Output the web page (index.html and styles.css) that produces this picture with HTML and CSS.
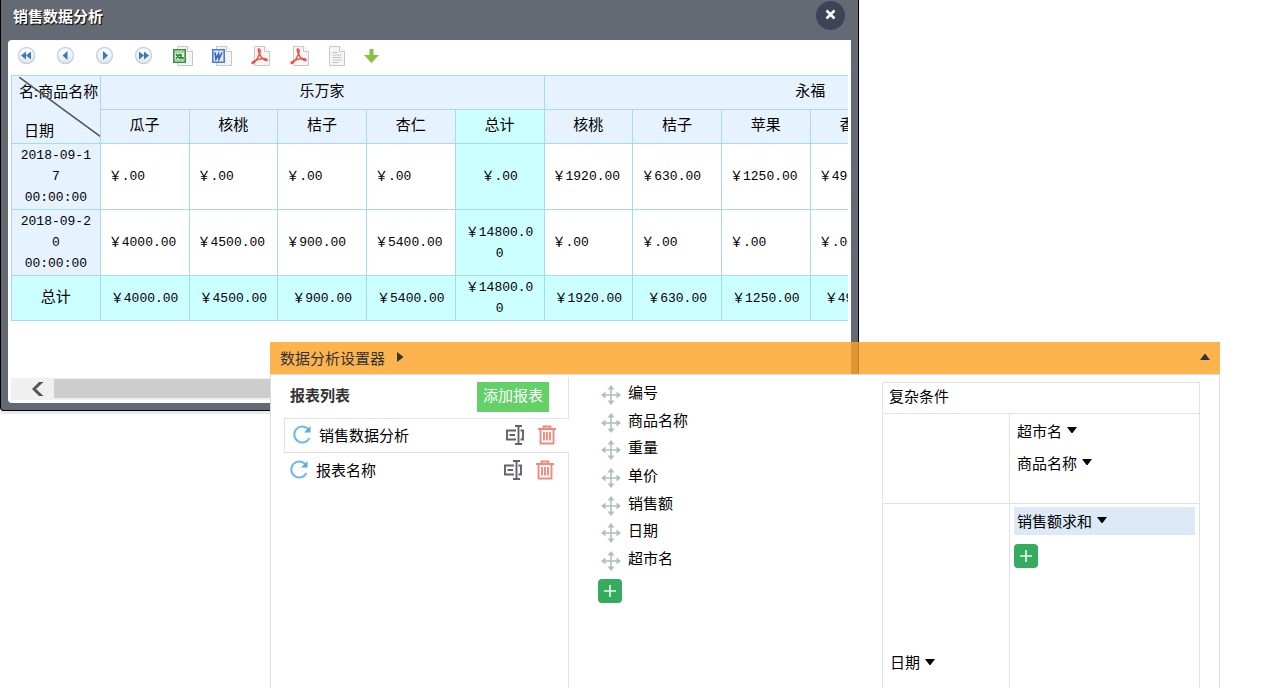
FILE: index.html
```html
<!DOCTYPE html>
<html lang="zh-CN">
<head>
    <meta charset="UTF-8">
    <meta name="viewport" content="width=device-width, initial-scale=1.0">
    <title>销售数据分析</title>
    <link rel="stylesheet" href="styles.css">
</head>
<body>
    <!-- Shared icons -->
    <svg class="icon-defs" aria-hidden="true">
        <defs>
            <linearGradient id="ballFill" x1="0" y1="0" x2="0" y2="1">
                <stop offset="0" stop-color="#ffffff"/>
                <stop offset="1" stop-color="#dce9f5"/>
            </linearGradient>
            <g id="ball">
                <circle cx="9.5" cy="9.5" r="8" fill="url(#ballFill)" stroke="#c9d0d9" stroke-width="1.4"/>
            </g>
            <g id="page">
                <path d="M2.500 .5h10l5 5v14h-15z" fill="#f5f5f5" stroke="#c8c8c8"/>
                <path d="M12.500 .5v5h5" fill="#fff" stroke="#c8c8c8"/>
            </g>
            <g id="pdf">
                <use href="#page" x="1"/>
                <path d="M7.500 3C9.500 2.500 9.500 5.500 8.500 8S4 17.500 1.500 17.500C-.5 16.500 5 13.800 9 13S16.500 12.500 16 14.300C15 15.500 10.500 12.500 9 9S6.500 4 7.500 3z" fill="none" stroke="#e5534b" stroke-width="1.500"/>
            </g>
            <symbol id="refresh" viewBox="0 0 20 20">
                <path d="M16.500 4.500A8 8 0 1 0 17.500 13" fill="none" stroke="#71b7e6" stroke-width="2"/>
                <path d="M18.500 1v6.500H12z" fill="#5aabe2"/>
            </symbol>
            <symbol id="rename" viewBox="0 0 18 20">
                <path d="M10 5.500H1v9h9M14.500 5.500H17v9h-2.500M3.500 10H9M9 1h7M9 19h7M12.500 1v18" fill="none" stroke="#62626f" stroke-width="1.900"/>
            </symbol>
            <symbol id="trash" viewBox="0 0 18 20">
                <path d="M0 4h18M5.500 4V1.500h7V4M2.500 4v14.500h13V4M6 7v8.500M9 7v8.500M12 7v8.500" fill="none" stroke="#f08a7c" stroke-width="1.900"/>
            </symbol>
            <symbol id="move" viewBox="0 0 20 20">
                <path d="M10 3v14M3 10h14" stroke="#afbfbe" stroke-width="1.500"/>
                <path d="M10 0l3.500 4.500h-7zM10 20l3.500-4.500h-7zM0 10l4.500-3.500v7zM20 10l-4.500-3.500v7z" fill="#afbfbe"/>
            </symbol>
            <symbol id="plus" viewBox="0 0 24 24">
                <rect width="24" height="24" rx="4" fill="#36ab60"/>
                <path d="M12 6v12M6 12h12" stroke="#e4f7ea" stroke-width="1.700"/>
            </symbol>
            <symbol id="down" viewBox="0 0 10 6">
                <path d="M0 0h10L5.500 6h-1z"/>
            </symbol>
        </defs>
    </svg>

    <!-- Report Window -->
    <section class="report-window">
        <header class="window-title">
            <h1>销售数据分析</h1>
            <button class="close-btn" aria-label="关闭">
                <svg width="11" height="11" viewBox="0 0 11 11"><path d="M1.500 1.500l8 8M9.500 1.500l-8 8" stroke="#fff" stroke-width="2.500"/></svg>
            </button>
        </header>
        <div class="window-body">
            <div class="toolbar">
                <button aria-label="首页"><svg viewBox="0 0 20 20"><use href="#ball"/><path d="M9 5.500v8l-5-4zM14 5.500v8l-5-4z" fill="#3f76c3"/></svg></button>
                <button aria-label="上一页"><svg viewBox="0 0 20 20"><use href="#ball"/><path d="M11.500 5v9l-5-4.500z" fill="#3f76c3"/></svg></button>
                <button aria-label="下一页"><svg viewBox="0 0 20 20"><use href="#ball"/><path d="M8 5v9l5-4.500z" fill="#3f76c3"/></svg></button>
                <button aria-label="末页"><svg viewBox="0 0 20 20"><use href="#ball"/><path d="M5 5.500v8l5-4zM10 5.500v8l5-4z" fill="#3f76c3"/></svg></button>
                <button aria-label="导出Excel"><svg viewBox="0 0 20 20"><use href="#page" x="2"/><path d="M.8 3.800h11.400v12.400H.8z" fill="#e3f2df" stroke="#388e3c" stroke-width="1.600"/><path d="M2 6h9M2 14h9" stroke="#6cb56c"/><path d="M3 8l4 4.500M7 8l-4 4.500M8 8v4h3" fill="none" stroke="#267a2b" stroke-width="1.600"/></svg></button>
                <button aria-label="导出Word"><svg viewBox="0 0 20 20"><use href="#page" x="2"/><path d="M.8 3.800h11.400v12.400H.8z" fill="#e4ecfb" stroke="#4c7bd0" stroke-width="1.600"/><path d="M3 6.500l1 6.500 2.500-5 .5 5 3-6.500" fill="none" stroke="#3468c4" stroke-width="1.700"/></svg></button>
                <button aria-label="导出PDF"><svg viewBox="0 0 20 20"><use href="#pdf"/></svg></button>
                <button aria-label="分页导出PDF"><svg viewBox="0 0 20 20"><use href="#pdf"/></svg></button>
                <button class="narrow" aria-label="导出文本"><svg viewBox="2 0 16 20"><use href="#page"/><path d="M5.500 6.500h5M5.500 9h9M5.500 11.500h9M5.500 14h9M5.500 16.500h6" stroke="#c2c2c2"/></svg></button>
                <button class="narrow" aria-label="下载"><svg viewBox="0 0 16 16"><path d="M5.500 1h4v6H15l-7.500 8L0 7h5.500z" fill="#83c340"/></svg></button>
            </div>

            <div class="table-view">
                <table class="report">
                    <tr>
                        <th class="corner" rowspan="2">
                            <svg class="slash" viewBox="0 0 82 60" preserveAspectRatio="none"><path d="M0 0l82 60" stroke="#555" stroke-width="1.500"/></svg>
                            <div class="corner-top">名:商品名称</div>
                            <div class="corner-bottom">日期</div>
                        </th>
                        <th colspan="5">乐万家</th>
                        <th colspan="6">永福</th>
                    </tr>
                    <tr>
                        <th>瓜子</th>
                        <th>核桃</th>
                        <th>桔子</th>
                        <th>杏仁</th>
                        <th class="sum">总计</th>
                        <th>核桃</th>
                        <th>桔子</th>
                        <th>苹果</th>
                        <th>香蕉</th>
                        <th></th>
                        <th></th>
                    </tr>
                    <tr>
                        <th>2018-09-17<br>00:00:00</th>
                        <td>￥.00</td>
                        <td>￥.00</td>
                        <td>￥.00</td>
                        <td>￥.00</td>
                        <td class="sum">￥.00</td>
                        <td>￥1920.00</td>
                        <td>￥630.00</td>
                        <td>￥1250.00</td>
                        <td>￥490.00</td>
                        <td></td>
                        <td></td>
                    </tr>
                    <tr>
                        <th>2018-09-20<br>00:00:00</th>
                        <td>￥4000.00</td>
                        <td>￥4500.00</td>
                        <td>￥900.00</td>
                        <td>￥5400.00</td>
                        <td class="sum">￥14800.00</td>
                        <td>￥.00</td>
                        <td>￥.00</td>
                        <td>￥.00</td>
                        <td>￥.00</td>
                        <td></td>
                        <td></td>
                    </tr>
                    <tr>
                        <th class="sum">总计</th>
                        <td class="sum">￥4000.00</td>
                        <td class="sum">￥4500.00</td>
                        <td class="sum">￥900.00</td>
                        <td class="sum">￥5400.00</td>
                        <td class="sum">￥14800.00</td>
                        <td class="sum">￥1920.00</td>
                        <td class="sum">￥630.00</td>
                        <td class="sum">￥1250.00</td>
                        <td class="sum">￥490.00</td>
                        <td class="sum"></td>
                        <td class="sum"></td>
                    </tr>
                </table>
            </div>

            <div class="scrollbar">
                <button class="scroll-left" aria-label="向左滚动">
                    <svg width="12" height="14" viewBox="0 0 12 14"><path d="M11.500 0L4 7l7.500 7H7L0 7l7-7z" fill="#555"/></svg>
                </button>
                <div class="scroll-thumb"></div>
            </div>
        </div>
    </section>

    <!-- Settings Panel -->
    <section class="settings">
        <header class="settings-title">
            <h2>数据分析设置器</h2>
            <svg width="6" height="10" viewBox="0 0 6 10"><path d="M0 0l6 4.500v1L0 10z" fill="#333"/></svg>
            <button class="collapse-btn" aria-label="收起">
                <svg width="10" height="6" viewBox="0 0 10 6"><path d="M0 6h10L5.500 0h-1z" fill="#333"/></svg>
            </button>
        </header>
        <div class="settings-body">
            <!-- Report list -->
            <div class="reports">
                <div class="reports-head">
                    <h3>报表列表</h3>
                    <button class="add-report">添加报表</button>
                </div>
                <div class="report-item active">
                    <button aria-label="刷新"><svg width="20" height="20"><use href="#refresh"/></svg></button>
                    <a href="#">销售数据分析</a>
                    <button aria-label="重命名"><svg width="18" height="20"><use href="#rename"/></svg></button>
                    <button aria-label="删除"><svg width="18" height="20"><use href="#trash"/></svg></button>
                </div>
                <div class="report-item">
                    <button aria-label="刷新"><svg width="20" height="20"><use href="#refresh"/></svg></button>
                    <a href="#">报表名称</a>
                    <button aria-label="重命名"><svg width="18" height="20"><use href="#rename"/></svg></button>
                    <button aria-label="删除"><svg width="18" height="20"><use href="#trash"/></svg></button>
                </div>
                <div class="reports-rest"></div>
            </div>

            <!-- Draggable fields -->
            <div class="fields">
                <ul>
                    <li><svg width="20" height="20"><use href="#move"/></svg>编号</li>
                    <li><svg width="20" height="20"><use href="#move"/></svg>商品名称</li>
                    <li><svg width="20" height="20"><use href="#move"/></svg>重量</li>
                    <li><svg width="20" height="20"><use href="#move"/></svg>单价</li>
                    <li><svg width="20" height="20"><use href="#move"/></svg>销售额</li>
                    <li><svg width="20" height="20"><use href="#move"/></svg>日期</li>
                    <li><svg width="20" height="20"><use href="#move"/></svg>超市名</li>
                </ul>
                <button aria-label="添加字段"><svg width="24" height="24"><use href="#plus"/></svg></button>
            </div>

            <!-- Conditions -->
            <table class="conditions">
                <colgroup>
                    <col class="col-rows">
                    <col>
                </colgroup>
                <tr class="row-head">
                    <td colspan="2">复杂条件</td>
                </tr>
                <tr class="row-cols">
                    <td></td>
                    <td class="drop">
                        <button class="tag">超市名<svg width="10" height="6"><use href="#down"/></svg></button>
                        <button class="tag">商品名称<svg width="10" height="6"><use href="#down"/></svg></button>
                    </td>
                </tr>
                <tr class="row-values">
                    <td><button class="menu">日期<svg width="10" height="6"><use href="#down"/></svg></button></td>
                    <td class="drop">
                        <button class="tag selected">销售额求和<svg width="10" height="6"><use href="#down"/></svg></button>
                        <button class="add-value" aria-label="添加数值"><svg width="24" height="24"><use href="#plus"/></svg></button>
                    </td>
                </tr>
            </table>
        </div>
    </section>
</body>
</html>
```

FILE: styles.css
```css
* {
    box-sizing: border-box;
}

body, html {
    margin: 0;
    padding: 0;
    height: 100%;
    overflow: hidden;
    background-color: #fff;
    font-family: "Noto Sans CJK SC", sans-serif;
    font-size: 15px;
    color: #000;
}

h1, h2, h3, ul {
    margin: 0;
    padding: 0;
    font-size: 15px;
}

button {
    padding: 0;
    border: none;
    background: none;
    font: inherit;
    color: inherit;
    cursor: pointer;
}

a {
    color: #000;
    text-decoration: none;
}

svg {
    display: block;
}

.icon-defs {
    position: absolute;
    width: 0;
    height: 0;
}

/* report window */
.report-window {
    position: absolute;
    top: 0;
    left: 0;
    right: 407px;
    padding: 0 7px 7px;
    background-color: #646a74;
    border: 1px solid #000;
    border-top: none;
    border-radius: 0 0 4px 4px;
    box-shadow: 0 3px 1px #e8e8e8;
}

.window-title {
    display: flex;
    justify-content: space-between;
    align-items: flex-start;
    height: 40px;
    padding: 1px 6px 0 5px;
}

.window-title h1 {
    font-size: 15px;
    line-height: 30px;
    color: #fff;
    text-shadow: 1px 1px 1px #000;
}

.close-btn {
    display: flex;
    justify-content: center;
    align-items: center;
    width: 29px;
    height: 29px;
    padding-bottom: 2px;
    border-radius: 50%;
    background-color: #404358;
}

.window-body {
    padding: 3px;
    background-color: #fff;
    border-radius: 4px 0 0 4px;
}

.toolbar {
    display: flex;
    align-items: center;
    gap: 19px;
    height: 32px;
    padding: 0 6px 6px;
}

.toolbar button {
    width: 20px;
}

.toolbar .narrow {
    width: 16px;
}

.toolbar svg {
    width: 100%;
}

.table-view {
    overflow: hidden;
    height: 303px;
}

.report {
    width: 1066px;
    table-layout: fixed;
    border-collapse: collapse;
    font-family: "Liberation Mono", "Noto Sans CJK SC", monospace;
    font-size: 13px;
    line-height: 21px;
}

.report th, .report td {
    padding: 1px 8px;
    border: 1px solid #a6d8ff;
    word-break: break-all;
}

.report th {
    height: 34px;
    background-color: #e6f3ff;
    font-weight: normal;
    font-size: 15px;
}

.report tr:nth-child(n+3) th:not(.sum) {
    font-size: 13px;
}

.report .sum {
    background-color: #ccffff;
    text-align: center;
}

.report .corner {
    position: relative;
    padding: 0 0 0 7px;
    font-family: "Noto Sans CJK SC", sans-serif;
    text-align: left;
    white-space: nowrap;
    overflow: hidden;
}

.slash {
    position: absolute;
    top: 1px;
    left: 7px;
    width: 82px;
    height: 60px;
}

.corner-top {
    padding-bottom: 18px;
}

.corner-bottom {
    padding-left: 5px;
}

.scrollbar {
    display: flex;
    height: 22px;
    padding-bottom: 1px;
    background-color: #f0f0f0;
}

.scroll-left {
    display: flex;
    justify-content: center;
    align-items: center;
    width: 43px;
    padding-left: 10px;
}

.scroll-thumb {
    width: 70%;
    margin: 1px 0;
    background-color: #cdcdcd;
}

/* settings panel */
.settings {
    position: absolute;
    top: 342px;
    left: 270px;
    right: 46px;
    bottom: 0;
    display: flex;
    flex-direction: column;
}

.settings-title {
    display: flex;
    align-items: center;
    gap: 12px;
    height: 32px;
    padding: 0 10px 2px;
    background-color: rgba(254, 161, 34, 0.8);
    color: #333;
}

.settings-title h2 {
    font-weight: normal;
}

.collapse-btn {
    margin-left: auto;
}

.settings-body {
    display: flex;
    flex: 1;
    min-height: 0;
    overflow: hidden;
    background-color: #fff;
    border: 1px solid #ddd;
    border-bottom: none;
}

.reports {
    display: flex;
    flex-direction: column;
    width: 298px;
    padding-top: 2px;
}

.reports-head {
    display: flex;
    justify-content: space-between;
    align-items: center;
    height: 41px;
    padding: 0 19px 6px;
    border-right: 1px solid #e2e2e2;
}

.reports-head h3 {
    color: #333;
}

.add-report {
    height: 30px;
    margin-top: 5px;
    padding: 0 6px 4px;
    background-color: #64d068;
    color: #fff;
    line-height: 26px;
}

.report-item {
    display: flex;
    align-items: center;
    gap: 14px;
    height: 35px;
    padding: 0 14px 2px 18px;
    border-right: 1px solid #e2e2e2;
}

.report-item a {
    flex: 1;
    margin-left: -7px;
}

.report-item.active {
    margin-left: 13px;
    padding: 0 13px 2px 7px;
    border: 1px solid #e2e2e2;
    border-right: none;
}

.reports-rest {
    flex: 1;
    border-right: 1px solid #e2e2e2;
}

.fields {
    flex: 1;
    padding: 3px 29px;
}

.fields ul {
    display: flex;
    flex-direction: column;
    height: 193px;
    margin-bottom: 8px;
    list-style: none;
}

.fields li {
    display: flex;
    flex: 1;
    align-items: center;
    gap: 7px;
    padding-left: 3px;
}

.fields li svg {
    margin-top: 7px;
}

.conditions {
    width: 318px;
    height: 438px;
    margin: 7px 19px 0 0;
    table-layout: fixed;
    border-collapse: collapse;
}

.col-rows {
    width: 127px;
}

.conditions td {
    padding: 0 7px;
    border: 1px solid #e2e2e2;
}

.row-head {
    height: 31px;
}

.conditions .row-head td {
    padding: 0 6px 5px;
}

.row-cols {
    height: 90px;
}

.conditions .drop {
    padding: 3px 4px;
    vertical-align: top;
}

.tag, .menu {
    display: flex;
    align-items: center;
    gap: 5px;
}

.tag {
    width: 100%;
    height: 28px;
    margin-bottom: 4px;
    padding: 0 3px 2px;
}

.tag.selected {
    background-color: #dce9f7;
}

.add-value {
    margin-top: 5px;
}
```
